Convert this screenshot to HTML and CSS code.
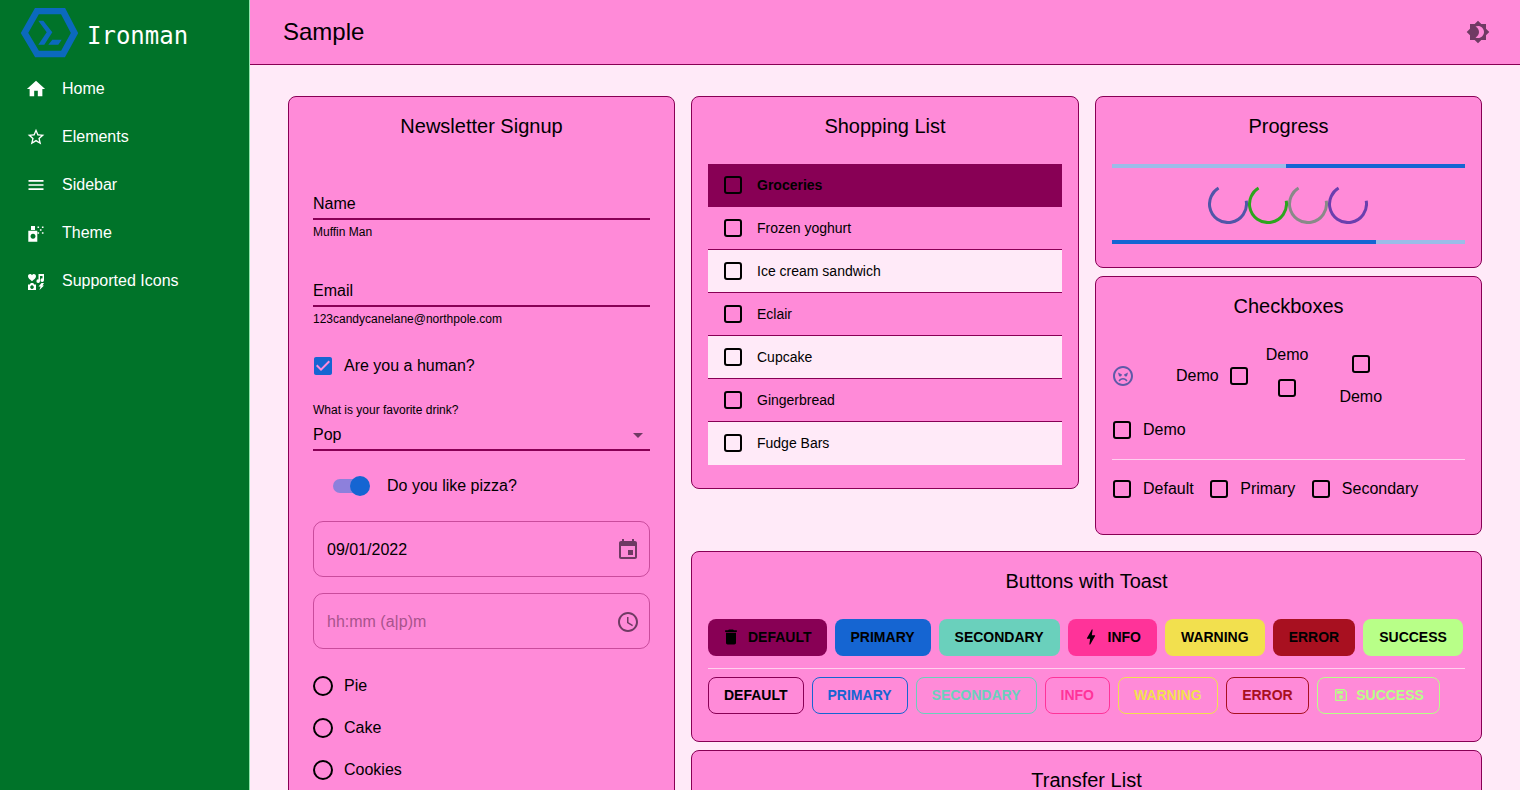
FILE: index.html
```html
<!DOCTYPE html>
<html lang="en">
<head>
    <meta charset="UTF-8">
    <meta name="viewport" content="width=device-width, initial-scale=1.0">
    <title>Ironman - Sample</title>
    <link rel="stylesheet" href="styles.css">
</head>
<body>
    <aside class="sidebar">
        <div class="brand">
            <svg class="brand-logo" viewBox="0 0 58 50">
                <path class="logo-hex" d="M4.500 25L17 3h26l11.500 22L43 46H17z"/>
                <path class="logo-sign" d="M18.300 12.700h5l9 11.600-8 12.400h-6l8.400-12.400zM32.300 31.700h9.400l-3.400 5h-10z"/>
            </svg>
            <span class="brand-name">Ironman</span>
        </div>
        <nav>
            <a class="nav-item"><svg class="icon" viewBox="1 1 22 22"><path d="M10 20v-6h4v6h5v-8h3L12 3 2 12h3v8z"/></svg>Home</a>
            <a class="nav-item"><svg class="icon" viewBox="0 0 24 24"><path d="M22 9.240l-7.190-.620L12 2 9.190 8.630 2 9.240l5.460 4.730L5.820 21 12 17.270 18.180 21l-1.630-7.030L22 9.240zM12 15.400l-3.760 2.270 1-4.280-3.320-2.880 4.380-.380L12 6.100l1.710 4.040 4.380.380-3.320 2.880 1 4.280L12 15.400z"/></svg>Elements</a>
            <a class="nav-item"><svg class="icon" viewBox="0 0 24 24"><path d="M3 18h18v-2H3v2zm0-5h18v-2H3v2zm0-7v2h18V6H3z"/></svg>Sidebar</a>
            <a class="nav-item"><svg class="icon" viewBox="2 2 20 20"><path fill-rule="evenodd" d="M7 5h4v4H7zM4.300 9.700h9v11h-9zM9 12.800a2.500 2.500 0 1 0 .01 0z"/><path d="M13.500 5.500h1.600v1.600h-1.600zM17.900 5.500h1.600v1.600h-1.600zM15.900 8.200h1.600v1.600h-1.600zM17.900 11.200h1.600v1.600h-1.600zM13.500 11.200h1.600v1.600h-1.600z"/></svg>Theme</a>
            <a class="nav-item"><svg class="icon" viewBox="2 2 20 20"><path fill-rule="evenodd" d="M4 7.200C4 5 7 4.300 8 6.200 9 4.300 12 5 12 7.200c0 2-2.300 3.500-4 5-1.700-1.500-4-3-4-5zM14.500 5H20v6.200a1.800 1.800 0 1 1-1.500-1.800V7H16v5.200a1.800 1.800 0 1 1-1.500-1.800zM4 15.500h1.800l1-1.500h2.400l1 1.500H12V21H4zM8 16.300a1.800 1.800 0 1 0 .01 0zM17.500 14H20l-1.500 2.500H20L15.500 21l1-3.500h-2z"/></svg>Supported Icons</a>
        </nav>
    </aside>

    <div class="main">
        <header class="topbar">
            <h1>Sample</h1>
            <svg class="icon-lg muted" viewBox="0 0 24 24"><path d="M20 8.690V4h-4.690L12 .690 8.690 4H4v4.690L.690 12 4 15.310V20h4.690L12 23.310 15.310 20H20v-4.690L23.310 12 20 8.690zM12 18c-.890 0-1.740-.200-2.500-.550C11.560 16.500 13 14.420 13 12s-1.440-4.500-3.500-5.450C10.260 6.200 11.110 6 12 6c3.310 0 6 2.690 6 6s-2.690 6-6 6z"/></svg>
        </header>

        <div class="content">
            <section class="card signup">
                <h2>Newsletter Signup</h2>
                <div class="text-field first">
                    <div class="text-value">Name</div>
                    <div class="helper">Muffin Man</div>
                </div>
                <div class="text-field">
                    <div class="text-value">Email</div>
                    <div class="helper">123candycanelane@northpole.com</div>
                </div>
                <label class="row human">
                    <svg class="check-on" viewBox="0 0 24 24"><path fill-rule="evenodd" d="M19 3H5c-1.110 0-2 .900-2 2v14c0 1.100.890 2 2 2h14c1.110 0 2-.900 2-2V5c0-1.100-.890-2-2-2zm-9 14l-5-5 1.410-1.410L10 14.170l7.590-7.590L19 8l-9 9z"/></svg>
                    Are you a human?
                </label>
                <div class="select">
                    <div class="select-label">What is your favorite drink?</div>
                    <div class="select-value">Pop<svg class="icon-lg muted" viewBox="0 0 24 24"><path d="M7 10l5 5 5-5z"/></svg></div>
                </div>
                <label class="row pizza">
                    <span class="switch"><span class="switch-thumb"></span></span>
                    Do you like pizza?
                </label>
                <div class="outlined">
                    <span>09/01/2022</span>
                    <svg class="icon-lg muted" viewBox="0 0 24 24"><path d="M17 12h-5v5h5v-5zM16 1v2H8V1H6v2H5c-1.110 0-1.990.900-1.990 2L3 19c0 1.100.890 2 2 2h14c1.100 0 2-.900 2-2V5c0-1.100-.900-2-2-2h-1V1h-2zm3 18H5V8h14v11z"/></svg>
                </div>
                <div class="outlined">
                    <span class="placeholder">hh:mm (a|p)m</span>
                    <svg class="icon-lg muted" viewBox="0 0 24 24"><path d="M11.990 2C6.470 2 2 6.480 2 12s4.470 10 9.990 10C17.520 22 22 17.520 22 12S17.520 2 11.990 2zM12 20c-4.420 0-8-3.580-8-8s3.580-8 8-8 8 3.580 8 8-3.580 8-8 8zm.500-13H11v6l5.250 3.150.750-1.230-4.500-2.670z"/></svg>
                </div>
                <div class="radios">
                    <label class="row"><span class="radio"></span>Pie</label>
                    <label class="row"><span class="radio"></span>Cake</label>
                    <label class="row"><span class="radio"></span>Cookies</label>
                </div>
            </section>

            <div class="right">
                <div class="top-cards">
                    <section class="card shopping">
                        <h2>Shopping List</h2>
                        <ul class="list">
                            <li class="selected"><span class="box"></span>Groceries</li>
                            <li><span class="box"></span>Frozen yoghurt</li>
                            <li><span class="box"></span>Ice cream sandwich</li>
                            <li><span class="box"></span>Eclair</li>
                            <li><span class="box"></span>Cupcake</li>
                            <li><span class="box"></span>Gingerbread</li>
                            <li><span class="box"></span>Fudge Bars</li>
                        </ul>
                    </section>

                    <div class="stack">
                        <section class="card progress">
                            <h2>Progress</h2>
                            <div class="bar"><div class="bar-fill buffer"></div></div>
                            <div class="spinners">
                                <svg viewBox="0 0 40 40" class="spin-blue"><circle cx="20" cy="20" r="18.500"/></svg>
                                <svg viewBox="0 0 40 40" class="spin-green"><circle cx="20" cy="20" r="18.500"/></svg>
                                <svg viewBox="0 0 40 40" class="spin-grey"><circle cx="20" cy="20" r="18.500"/></svg>
                                <svg viewBox="0 0 40 40" class="spin-purple"><circle cx="20" cy="20" r="18.500"/></svg>
                            </div>
                            <div class="bar"><div class="bar-fill determinate"></div></div>
                        </section>

                        <section class="card checkboxes">
                            <h2>Checkboxes</h2>
                            <div class="demo-row">
                                <svg class="icon-lg mood" viewBox="0 0 24 24"><path d="M11.990 2C6.470 2 2 6.480 2 12s4.470 10 9.990 10C17.520 22 22 17.520 22 12S17.520 2 11.990 2zM12 20c-4.420 0-8-3.580-8-8s3.580-8 8-8 8 3.580 8 8-3.580 8-8 8zM7 8.500l4 2-.500 1.300a1.500 1.500 0 0 1-2.800-.800zM17 8.500l-4 2 .500 1.300a1.500 1.500 0 0 0 2.800-.800zM12 14c-2 0-3.700 1-4.500 2.800l1.300.700c.600-1.200 1.800-2 3.200-2s2.600.800 3.200 2l1.300-.700C15.700 15 14 14 12 14z"/></svg>
                                <label class="demo-start">Demo<span class="box"></span></label>
                                <label class="demo-top">Demo<span class="box"></span></label>
                                <label class="demo-bottom"><span class="box"></span>Demo</label>
                            </div>
                            <label class="row plain"><span class="box"></span>Demo</label>
                            <hr>
                            <div class="color-row">
                                <label class="row"><span class="box"></span>Default</label>
                                <label class="row"><span class="box"></span>Primary</label>
                                <label class="row"><span class="box"></span>Secondary</label>
                            </div>
                        </section>
                    </div>
                </div>

                <section class="card buttons">
                    <h2>Buttons with Toast</h2>
                    <div class="btn-row">
                        <button class="btn fill-default"><svg class="btn-icon" viewBox="0 0 24 24"><path d="M6 19c0 1.100.900 2 2 2h8c1.100 0 2-.900 2-2V7H6v12zM19 4h-3.500l-1-1h-5l-1 1H5v2h14V4z"/></svg>Default</button>
                        <button class="btn fill-primary">Primary</button>
                        <button class="btn fill-secondary">Secondary</button>
                        <button class="btn fill-info"><svg class="btn-icon" viewBox="0 0 24 24"><path d="M11 21h-1l1-7H7.500c-.580 0-.570-.320-.380-.660.190-.340.050-.080.070-.120C8.480 10.940 10.420 7.540 13 3h1l-1 7h3.500c.490 0 .560.330.470.510l-.070.150C12.960 17.550 11 21 11 21z"/></svg>Info</button>
                        <button class="btn fill-warning">Warning</button>
                        <button class="btn fill-error">Error</button>
                        <button class="btn fill-success">Success</button>
                    </div>
                    <hr>
                    <div class="btn-row">
                        <button class="btn line-default">Default</button>
                        <button class="btn line-primary">Primary</button>
                        <button class="btn line-secondary">Secondary</button>
                        <button class="btn line-info">Info</button>
                        <button class="btn line-warning">Warning</button>
                        <button class="btn line-error">Error</button>
                        <button class="btn line-success"><svg class="btn-icon" viewBox="0 0 24 24"><path d="M17 3H5c-1.110 0-2 .900-2 2v14c0 1.100.890 2 2 2h14c1.100 0 2-.900 2-2V7l-4-4zm2 16H5V5h11.170L19 7.830V19zm-7-7c-1.660 0-3 1.340-3 3s1.340 3 3 3 3-1.340 3-3-1.340-3-3-3zM6 6h9v4H6z"/></svg>Success</button>
                    </div>
                </section>

                <section class="card transfer">
                    <h2>Transfer List</h2>
                </section>
            </div>
        </div>
    </div>
</body>
</html>
```

FILE: styles.css
```css
* {
    box-sizing: border-box;
}

html, body {
    height: 100%;
}

body {
    margin: 0;
    display: flex;
    overflow: hidden;
    background-color: #ffeaf8;
    color: #000;
    font-family: 'Liberation Sans', Arial, sans-serif;
    font-size: 16px;
}

h1, h2 {
    margin: 0;
    font-weight: 400;
}

hr {
    margin: 0;
    border: 0;
    border-top: 1px solid rgba(255, 255, 255, 0.6);
}

.icon {
    width: 20px;
    height: 20px;
    fill: currentColor;
    flex-shrink: 0;
}

.icon-lg {
    width: 24px;
    height: 24px;
    fill: currentColor;
    flex-shrink: 0;
}

.muted {
    color: #6f3a63;
}

/* sidebar */
.sidebar {
    width: 250px;
    flex-shrink: 0;
    background-color: #007329;
    border-right: 1px solid #8de6ab;
    color: #fff;
}

.brand {
    display: flex;
    align-items: center;
    height: 65px;
    padding: 1px 0 0 20px;
}

.brand-logo {
    width: 58px;
    height: 50px;
    flex-shrink: 0;
}

.logo-hex {
    fill: none;
    stroke: #0b69bd;
    stroke-width: 6.500;
}

.logo-sign {
    fill: #0b69bd;
}

.brand-name {
    margin: 5px 0 0 9px;
    font-family: 'DejaVu Sans Mono', monospace;
    font-size: 24px;
}

.nav-item {
    display: flex;
    align-items: center;
    height: 48px;
    padding-left: 26px;
    gap: 16px;
}

/* header */
.main {
    flex: 1;
    min-width: 0;
}

.topbar {
    display: flex;
    align-items: center;
    justify-content: space-between;
    height: 65px;
    padding: 0 30px 0 33px;
    background-color: #ff8ad8;
    border-bottom: 1px solid #880055;
}

.topbar h1 {
    font-size: 24px;
}

.content {
    display: flex;
    align-items: flex-start;
    gap: 16px;
    padding: 31px 38px 0;
}

/* cards */
.card {
    background-color: #ff8ad8;
    border: 1px solid #880055;
    border-radius: 8px;
    padding: 16px;
}

.card h2 {
    font-size: 20px;
    line-height: 26px;
    text-align: center;
}

.signup {
    width: 387px;
    height: 800px;
    flex-shrink: 0;
    padding: 16px 24px;
}

.right {
    flex: 1;
    min-width: 0;
    display: flex;
    flex-direction: column;
}

.top-cards {
    display: flex;
    align-items: flex-start;
    gap: 16px;
}

.shopping {
    flex: 1;
    height: 393px;
}

.stack {
    width: 387px;
    display: flex;
    flex-direction: column;
    gap: 8px;
}

/* signup form */
.text-field {
    margin-top: 40px;
}

.text-field.first {
    margin-top: 53px;
}

.text-value {
    height: 28px;
    padding-top: 2px;
    line-height: 20px;
    border-bottom: 2px solid #880055;
}

.helper {
    margin-top: 5px;
    font-size: 12px;
    line-height: 14px;
}

.row {
    display: flex;
    align-items: center;
    gap: 12px;
}

.human {
    margin-top: 28px;
    height: 24px;
    gap: 9px;
    margin-left: -2px;
}

.check-on {
    width: 24px;
    height: 24px;
    fill: #1565d2;
}

.select {
    margin-top: 25px;
}

.select-label {
    margin-bottom: 4px;
    font-size: 12px;
    line-height: 14px;
}

.select-value {
    display: flex;
    align-items: center;
    justify-content: space-between;
    height: 30px;
    border-bottom: 2px solid #880055;
}

.pizza {
    margin-top: 23px;
    margin-left: 20px;
    height: 24px;
    gap: 20px;
}

.switch {
    position: relative;
    width: 34px;
    height: 14px;
    border-radius: 7px;
    background-color: #8d80dc;
}

.switch-thumb {
    position: absolute;
    right: -3px;
    top: -3px;
    width: 20px;
    height: 20px;
    border-radius: 50%;
    background-color: #1565d2;
}

.outlined {
    display: flex;
    align-items: center;
    justify-content: space-between;
    height: 56px;
    margin-top: 16px;
    padding: 2px 9px 0 13px;
    border: 1px solid rgba(136, 0, 85, 0.45);
    border-radius: 10px;
}

.pizza + .outlined {
    margin-top: 23px;
}

.placeholder {
    color: #a8538c;
}

.radios {
    margin-top: 16px;
}

.radios .row {
    height: 42px;
    gap: 11px;
}

.radio {
    width: 20px;
    height: 20px;
    border: 2px solid #000;
    border-radius: 50%;
}

/* shopping list */
.box {
    display: block;
    width: 18px;
    height: 18px;
    flex-shrink: 0;
    border: 2px solid #000;
    border-radius: 3px;
}

.list {
    list-style: none;
    margin: 25px 0 0;
    padding: 0;
    font-size: 14px;
}

.list li {
    display: flex;
    align-items: center;
    gap: 15px;
    height: 43px;
    padding-left: 16px;
    border-bottom: 1px solid #880055;
}

.list li:nth-child(odd) {
    background-color: #ffeaf8;
}

.list li:last-child {
    border-bottom-color: transparent;
}

.list li.selected {
    background-color: #880055;
    font-weight: 700;
}

/* progress */
.progress {
    height: 172px;
}

.bar {
    height: 4px;
    background-color: #9bbce8;
}

.progress h2 + .bar {
    margin-top: 25px;
}

.bar-fill {
    height: 100%;
    background-color: #1565d2;
}

.buffer {
    margin-left: 49.300%;
}

.determinate {
    width: 74.800%;
}

.spinners {
    display: flex;
    justify-content: center;
    height: 72px;
    padding: 16px 2px 0 0;
}

.spinners svg {
    width: 40px;
    height: 40px;
    fill: none;
    stroke-width: 3;
}

.spinners circle {
    stroke-dasharray: 80 200;
    transform: rotate(-10deg);
    transform-origin: center;
}

.spin-blue { stroke: #5056a8; }
.spin-green { stroke: #2ca51e; }
.spin-grey { stroke: #888a88; }
.spin-purple { stroke: #6a3fae; }

/* checkboxes */
.checkboxes {
    height: 259px;
}

.demo-row {
    display: flex;
    align-items: center;
    height: 68px;
    margin-top: 23px;
}

.mood {
    margin-left: -1px;
    color: #5f5aa8;
}

.demo-start {
    display: flex;
    align-items: center;
    gap: 11px;
    margin-left: 41px;
}

.demo-top, .demo-bottom {
    display: flex;
    flex-direction: column;
    align-items: center;
    gap: 15px;
    line-height: 18px;
}

.demo-top {
    margin: 0 0 10px 18px;
}

.demo-bottom {
    margin: 8px 0 0 31px;
}

.plain {
    margin: 8px 0 0 1px;
    height: 24px;
}

.checkboxes hr {
    margin-top: 17px;
}

.color-row {
    display: flex;
    margin: 20px 0 0 1px;
    gap: 16.500px;
}

/* buttons */
.buttons {
    height: 191px;
    margin-top: 16px;
}

.btn-row {
    display: flex;
    gap: 8px;
}

.buttons h2 + .btn-row {
    margin-top: 25px;
}

.buttons hr {
    margin: 12px 0 8px;
}

.btn {
    display: flex;
    align-items: center;
    justify-content: center;
    height: 37px;
    padding: 0 15px 2px;
    border: 1px solid transparent;
    border-radius: 8px;
    background: none;
    color: #000;
    font-family: inherit;
    font-size: 14px;
    font-weight: 700;
    text-transform: uppercase;
}

.btn-icon {
    width: 20px;
    height: 20px;
    margin: 0 7px 0 -3px;
    fill: currentColor;
}

.fill-default { background-color: #880055; padding-right: 14px; }
.fill-primary { background-color: #1565d2; }
.fill-secondary { background-color: #6ad0bc; }
.fill-info { background-color: #ff3399; }
.fill-warning { background-color: #f2e04e; }
.fill-error { background-color: #a81020; }
.fill-success { background-color: #b8ff88; }

.line-default { border-color: #880055; }
.line-primary { border-color: #1565d2; color: #1565d2; }
.line-secondary { border-color: #6ad0bc; color: #6ad0bc; }
.line-info { border-color: #ff3399; color: #ff3399; }
.line-warning { border-color: #f2e04e; color: #f2e04e; }
.line-error { border-color: #a81020; color: #a81020; padding: 0 15.500px 2px; }
.line-success { border-color: #b8ff88; color: #b8ff88; }

.line-success .btn-icon {
    width: 16px;
    height: 16px;
    margin: 0 7px 0 0;
}

.transfer {
    height: 200px;
    margin-top: 8px;
}
```
